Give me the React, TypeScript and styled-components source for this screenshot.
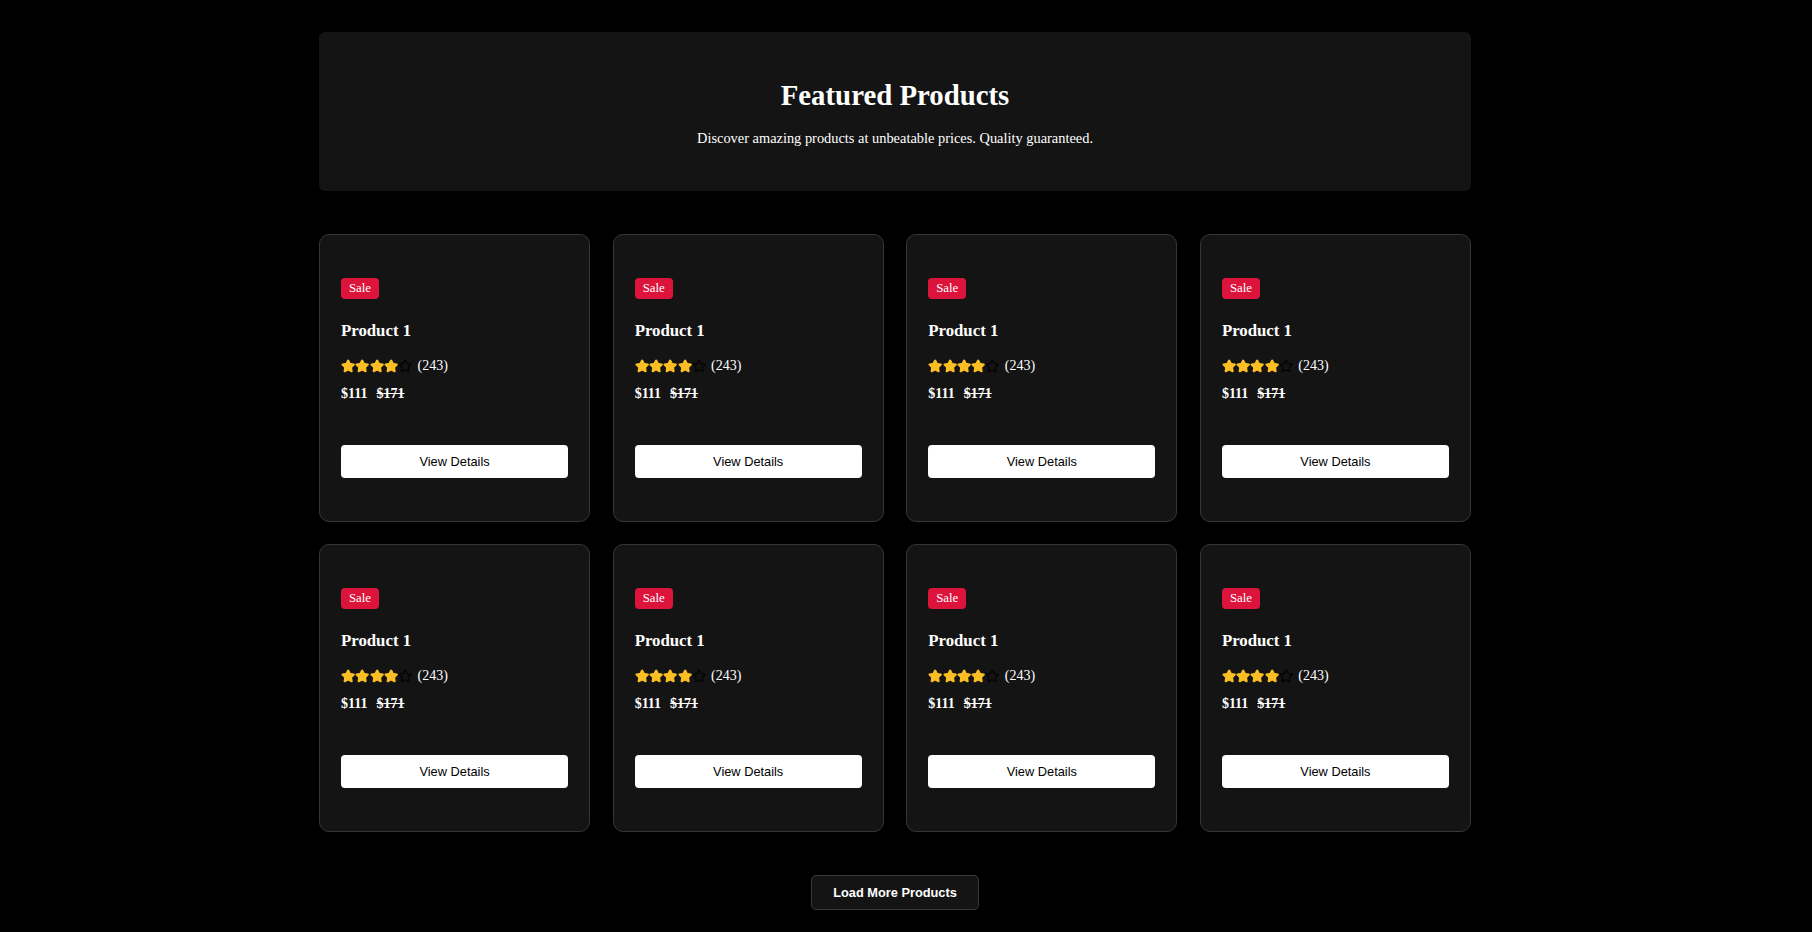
import React from "react";
import styled, { createGlobalStyle } from "styled-components";
import { Star } from "lucide-react";

const Global = createGlobalStyle`
  html, body { margin: 0; padding: 0; background: #000; }
  body { font-family: "Liberation Serif", "Times New Roman", serif; color: #fff; }
  * { box-sizing: border-box; }
`;

const Outer = styled.div`
  padding: 32px 22px 12px 0;
`;

const Page = styled.main`
  width: 1152px;
  margin: 0 auto;
  display: flex;
  flex-direction: column;
  align-items: center;
`;

const Hero = styled.header`
  width: 100%;
  background: #141414;
  border-radius: 6px;
  padding: 47px 20px 44px;
  text-align: center;
`;

const Title = styled.h1`
  margin: 0 0 18px;
  font-size: 28.8px;
  font-weight: 700;
  color: #fff;
`;

const Subtitle = styled.p`
  margin: 0;
  font-size: 14.4px;
  color: #fff;
`;

const Grid = styled.section`
  width: 100%;
  margin-top: 43px;
  display: grid;
  grid-template-columns: repeat(4, 1fr);
  gap: 22px 22.5px;
`;

const Card = styled.article`
  background: #141414;
  border: 1px solid #363636;
  border-radius: 10px;
  padding: 43px 21px 43px;
  display: flex;
  flex-direction: column;
  align-items: flex-start;
`;

const Badge = styled.span`
  background: #dc143c;
  color: #fff;
  font-size: 12.8px;
  line-height: 15px;
  padding: 3px 8px;
  border-radius: 4px;
`;

const Name = styled.h3`
  margin: 22px 0 0;
  font-size: 16.8px;
  font-weight: 700;
  color: #fff;
`;

const RatingRow = styled.div`
  margin-top: 17px;
  display: flex;
  align-items: center;
  gap: 5px;
  font-size: 14px;
  color: #fff;
`;

const Stars = styled.div`
  display: flex;
  align-items: center;
`;

const PriceRow = styled.div`
  margin-top: 12px;
  display: flex;
  align-items: baseline;
  gap: 9px;
  font-size: 14px;
  font-weight: 700;
  color: #fff;
`;

const OldPrice = styled.span`
  text-decoration: line-through;
`;

const DetailsButton = styled.button`
  margin-top: 43px;
  width: 100%;
  height: 33px;
  background: #fff;
  color: #000;
  border: none;
  border-radius: 4px;
  font-family: "Liberation Sans", Arial, sans-serif;
  font-size: 12.8px;
  cursor: pointer;
`;

const LoadMore = styled.button`
  margin-top: 43px;
  height: 35px;
  padding: 0 21px;
  background: #141414;
  color: #fff;
  border: 1px solid #3a3a3a;
  border-radius: 5px;
  font-family: "Liberation Sans", Arial, sans-serif;
  font-size: 12.8px;
  font-weight: 700;
  cursor: pointer;
`;

const products = Array.from({ length: 8 }, (_, i) => ({
  id: i,
  name: "Product 1",
  rating: 4,
  reviews: 243,
  price: 111,
  oldPrice: 171,
}));

export default function App() {
  return (
    <>
      <Global />
      <Outer>
        <Page>
          <Hero>
            <Title>Featured Products</Title>
            <Subtitle>Discover amazing products at unbeatable prices. Quality guaranteed.</Subtitle>
          </Hero>
          <Grid>
            {products.map((p) => (
              <Card key={p.id}>
                <Badge>Sale</Badge>
                <Name>{p.name}</Name>
                <RatingRow>
                  <Stars>
                    {[0, 1, 2, 3, 4].map((s) => (
                      <Star
                        key={s}
                        size={14.3}
                        strokeWidth={2.5}
                        color={s < p.rating ? "#fbbf24" : "#050505"}
                        fill={s < p.rating ? "#fbbf24" : "none"}
                      />
                    ))}
                  </Stars>
                  <span>({p.reviews})</span>
                </RatingRow>
                <PriceRow>
                  <span>${p.price}</span>
                  <OldPrice>${p.oldPrice}</OldPrice>
                </PriceRow>
                <DetailsButton>View Details</DetailsButton>
              </Card>
            ))}
          </Grid>
          <LoadMore>Load More Products</LoadMore>
        </Page>
      </Outer>
    </>
  );
}
